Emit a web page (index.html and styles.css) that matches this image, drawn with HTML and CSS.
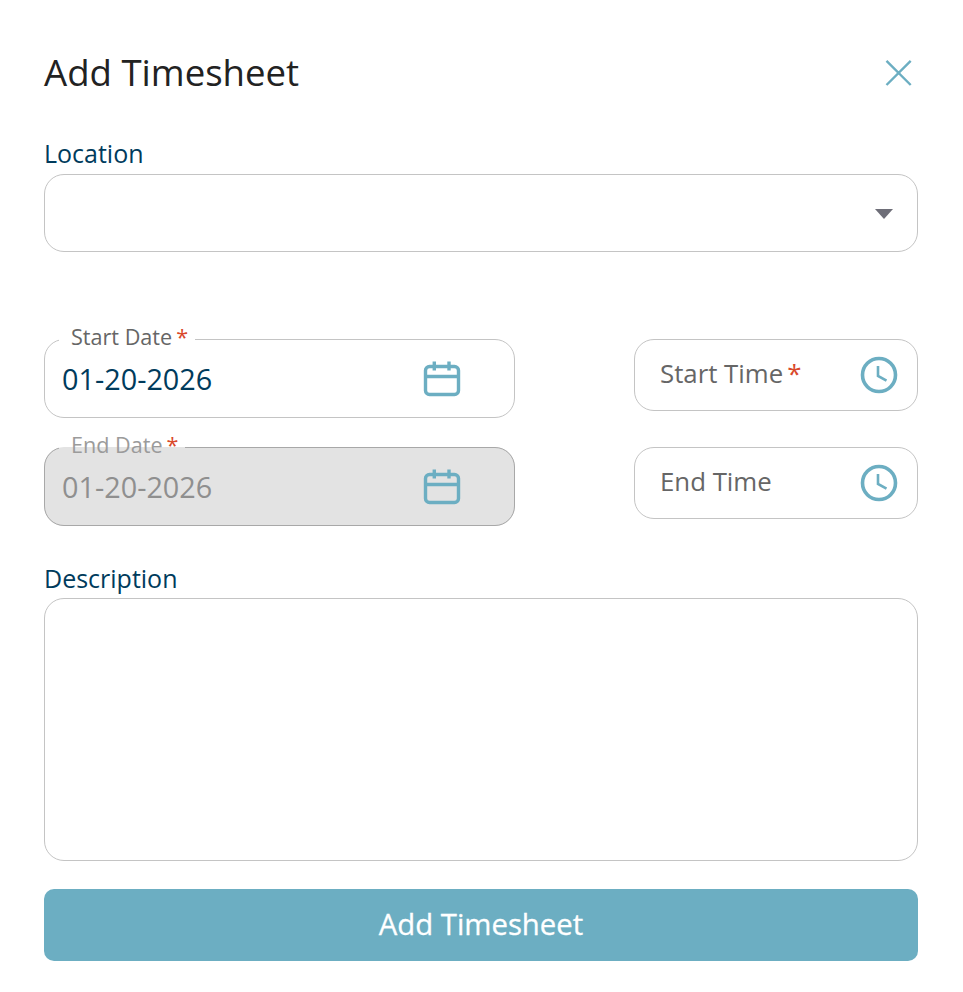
FILE: index.html
```html
<!DOCTYPE html>
<html lang="en">
<head>
  <meta charset="UTF-8" />
  <title>Add Timesheet</title>
  <meta name="viewport" content="width=device-width, initial-scale=1" />
  <link rel="stylesheet" href="styles.css">
</head>
<body>
  <form class="sheet">
    <div class="sheet-head">
      <h1>Add Timesheet</h1>
      <button type="button" class="close-btn" aria-label="Close">
        <svg width="30" height="30" viewBox="0 0 30 30"><path d="M2.5 2.8 L26.7 27 M26.7 2.8 L2.5 27" /></svg>
      </button>
    </div>

    <div class="location">
      <label class="field-label" for="location">Location</label>
      <div class="select-box" id="location"><span class="caret"></span></div>
    </div>

    <div class="when">
      <fieldset class="date-field">
        <legend>Start Date<span class="req">*</span></legend>
        <span class="date-value">01-20-2026</span>
        <svg class="cal" width="38" height="38" viewBox="0 0 38 38"><rect x="2.5" y="6.5" width="33" height="28" rx="4" /><path d="M2.5 16.5 H35.5 M11.3 1.5 V10.5 M26 1.5 V10.5" /></svg>
      </fieldset>
      <div class="time-field">
        <span class="time-label">Start Time<span class="req">*</span></span>
        <svg class="clock" width="38" height="38" viewBox="0 0 38 38"><circle cx="19" cy="19" r="16.5" /><path d="M18 10 V20 L26.5 24.7" class="hands" /></svg>
      </div>
      <fieldset class="date-field is-disabled">
        <legend>End Date<span class="req">*</span></legend>
        <span class="date-value">01-20-2026</span>
        <svg class="cal" width="38" height="38" viewBox="0 0 38 38"><rect x="2.5" y="6.5" width="33" height="28" rx="4" /><path d="M2.5 16.5 H35.5 M11.3 1.5 V10.5 M26 1.5 V10.5" /></svg>
      </fieldset>
      <div class="time-field">
        <span class="time-label">End Time</span>
        <svg class="clock" width="38" height="38" viewBox="0 0 38 38"><circle cx="19" cy="19" r="16.5" /><path d="M18 10 V20 L26.5 24.7" class="hands" /></svg>
      </div>
    </div>

    <div class="description">
      <label class="field-label" for="desc">Description</label>
      <textarea id="desc"></textarea>
    </div>

    <button type="button" class="submit-btn">Add Timesheet</button>
  </form>
</body>
</html>
```

FILE: styles.css
```css
html, body {
  margin: 0;
  background: #fff;
}
body {
  font-family: 'Open Sans', sans-serif;
}
.sheet {
  box-sizing: border-box;
  width: 963px;
  height: 992px;
  padding: 49px 45px 0 44px;
}
.sheet-head {
  display: flex;
  justify-content: space-between;
  align-items: center;
  height: 48px;
}
h1 {
  margin: 0 0 2px;
  font-size: 36.6px;
  font-weight: 400;
  line-height: 46px;
  color: #222;
}
.close-btn {
  padding: 0;
  margin-right: 4px;
  border: none;
  background: none;
  cursor: pointer;
  display: flex;
}
.close-btn svg path {
  fill: none;
  stroke: #6caec2;
  stroke-width: 2.4;
}
.field-label {
  display: block;
  margin-bottom: 3px;
  font-size: 25px;
  line-height: 33px;
  color: #003b5c;
}
.location {
  margin-top: 40px;
}
.location .field-label {
  margin-bottom: 4px;
}
.select-box {
  box-sizing: border-box;
  height: 78px;
  border: 1px solid #c4c4c4;
  border-radius: 20px;
  display: flex;
  align-items: center;
  justify-content: flex-end;
  padding: 2px 24px 0 0;
}
.caret {
  width: 0;
  height: 0;
  border-left: 9px solid transparent;
  border-right: 9px solid transparent;
  border-top: 10px solid #6e6e78;
}
.when {
  margin-top: 74px;
  display: grid;
  grid-template-columns: 471px 284px;
  grid-auto-rows: 92px;
  column-gap: 119px;
  row-gap: 16px;
  align-items: start;
}
.date-field {
  box-sizing: border-box;
  margin: 0;
  height: 92px;
  padding: 0 53px 12px 17px;
  border: 1px solid #c4c4c4;
  border-radius: 20px;
  display: flex;
  align-items: center;
  justify-content: space-between;
  min-width: 0;
}
.date-field legend {
  margin-left: -3px;
  padding: 0 7px 4px 12px;
  font-size: 21.6px;
  line-height: 22px;
  color: #666;
}
.req {
  margin-left: 4px;
  color: #d9482a;
}
.date-value {
  font-size: 28.8px;
  color: #003b5c;
}
.date-field svg {
  flex: none;
}
.is-disabled {
  background: #e3e3e3;
  border-color: #a8a8a8;
}
.is-disabled legend {
  color: #9b9b9b;
}
.is-disabled .date-value {
  color: #8f8f8f;
}
.cal rect, .cal path, .clock circle, .clock path {
  fill: none;
  stroke: #6caec2;
}
.cal rect, .cal path {
  stroke-width: 3.4;
}
.clock circle {
  stroke-width: 3.6;
}
.clock .hands {
  stroke-width: 2.6;
}
.time-field {
  box-sizing: border-box;
  height: 72px;
  margin-top: 13px;
  border: 1px solid #c4c4c4;
  border-radius: 20px;
  padding: 0 19px 0 25px;
  display: flex;
  align-items: center;
  justify-content: space-between;
  font-size: 25.8px;
  color: #666;
}
.time-label {
  margin-bottom: 4px;
}
.description {
  margin-top: 36px;
}
textarea {
  display: block;
  box-sizing: border-box;
  width: 100%;
  height: 263px;
  border: 1px solid #c4c4c4;
  border-radius: 20px;
  resize: none;
  outline: none;
}
.submit-btn {
  display: block;
  width: 100%;
  height: 72px;
  margin-top: 28px;
  padding: 0 0 2px;
  border: none;
  border-radius: 10px;
  background: #6caec2;
  color: #fff;
  font-family: 'Open Sans', sans-serif;
  font-size: 29.3px;
  font-weight: 500;
  -webkit-text-stroke: 0.3px #fff;
  cursor: pointer;
}
```
